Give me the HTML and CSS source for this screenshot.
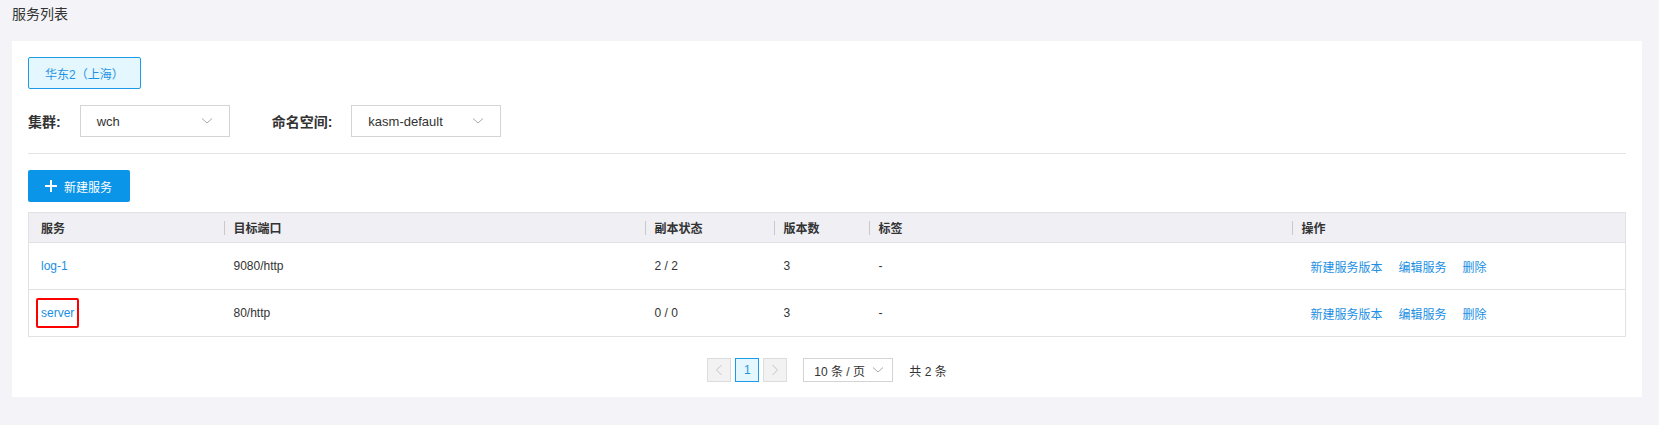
FILE: index.html
```html
<!DOCTYPE html>
<html lang="zh-CN">
<head>
  <meta charset="UTF-8">
  <title>服务列表</title>
  <link rel="stylesheet" href="styles.css">
</head>
<body>

  <div class="page-title">服务列表</div>

  <div class="card">
    <div class="region-row">
      <button class="region-btn">华东2（上海）</button>
    </div>

    <div class="filter-row">
      <label class="filter-label">集群:</label>
      <div class="select select-wide">
        <span>wch</span>
        <svg class="chevron" width="12" height="8" viewBox="0 0 12 8"><polyline points="1,1.5 6,6 11,1.5" fill="none" stroke="#aaa" stroke-width="1"/></svg>
      </div>
      <label class="filter-label ns-label">命名空间:</label>
      <div class="select select-wide">
        <span>kasm-default</span>
        <svg class="chevron" width="12" height="8" viewBox="0 0 12 8"><polyline points="1,1.5 6,6 11,1.5" fill="none" stroke="#aaa" stroke-width="1"/></svg>
      </div>
    </div>

    <div class="divider"></div>

    <button class="create-btn">
      <svg width="12" height="12" viewBox="0 0 12 12"><path d="M6 0v12M0 6h12" stroke="#fff" stroke-width="2"/></svg>
      <span>新建服务</span>
    </button>

    <table class="svc-table">
      <colgroup>
        <col style="width:195px">
        <col style="width:421px">
        <col style="width:129px">
        <col style="width:95px">
        <col style="width:423px">
        <col>
      </colgroup>
      <thead>
        <tr>
          <th>服务</th>
          <th>目标端口</th>
          <th>副本状态</th>
          <th>版本数</th>
          <th>标签</th>
          <th>操作</th>
        </tr>
      </thead>
      <tbody>
        <tr>
          <td><a class="link">log-1</a></td>
          <td>9080/http</td>
          <td>2 / 2</td>
          <td>3</td>
          <td>-</td>
          <td class="actions"><a class="link">新建服务版本</a><a class="link">编辑服务</a><a class="link">删除</a></td>
        </tr>
        <tr>
          <td><a class="link mark">server</a></td>
          <td>80/http</td>
          <td>0 / 0</td>
          <td>3</td>
          <td>-</td>
          <td class="actions"><a class="link">新建服务版本</a><a class="link">编辑服务</a><a class="link">删除</a></td>
        </tr>
      </tbody>
    </table>

    <div class="pager">
      <span class="page-btn disabled">
        <svg width="8" height="12" viewBox="0 0 8 12"><polyline points="6.5,1 1.5,6 6.5,11" fill="none" stroke="#c4c4c4" stroke-width="1"/></svg>
      </span>
      <span class="page-btn current">1</span>
      <span class="page-btn disabled">
        <svg width="8" height="12" viewBox="0 0 8 12"><polyline points="1.5,1 6.5,6 1.5,11" fill="none" stroke="#c4c4c4" stroke-width="1"/></svg>
      </span>
      <div class="select select-page">
        <span>10 条 / 页</span>
        <svg class="chevron" width="12" height="8" viewBox="0 0 12 8"><polyline points="1,1.5 6,6 11,1.5" fill="none" stroke="#aaa" stroke-width="1"/></svg>
      </div>
      <span class="total">共 2 条</span>
    </div>
  </div>

</body>
</html>
```

FILE: styles.css
```css
body {
  margin: 0;
  padding: 0 17px 0 12px;
  background-color: #f4f4f8;
  font-family: "Liberation Sans", "Noto Sans CJK SC", sans-serif;
  font-size: 12px;
  color: #333;
}
.page-title {
  height: 41px;
  line-height: 28px;
  font-size: 14px;
  color: #333;
}
.card {
  background-color: #fff;
  padding: 16px 16px 16px 16px;
  height: 356px;
  box-sizing: border-box;
}
.region-btn {
  height: 32px;
  padding: 0 16px;
  font-family: inherit;
  font-size: 12px;
  color: #1f93e3;
  background-color: #e4f6fe;
  border: 1px solid #1d9be9;
  border-radius: 2px;
}
.filter-row {
  display: flex;
  align-items: center;
  margin-top: 16px;
  height: 32px;
}
.filter-label {
  font-size: 14px;
  font-weight: bold;
  color: #333;
  margin-right: 19px;
}
.ns-label {
  margin-left: 42px;
}
.select {
  display: flex;
  align-items: center;
  justify-content: space-between;
  box-sizing: border-box;
  border: 1px solid #d4d4d4;
  background-color: #fff;
  color: #333;
}
.select-wide {
  width: 150px;
  height: 32px;
  padding: 0 16px 0 16px;
  font-size: 13px;
}
.divider {
  height: 1px;
  background-color: #e3e3e3;
  margin: 16px 0 16px;
}
.create-btn {
  display: flex;
  align-items: center;
  gap: 7px;
  height: 32px;
  padding: 0 18px 0 17px;
  font-family: inherit;
  font-size: 12px;
  color: #fff;
  background-color: #0a95e9;
  border: none;
  border-radius: 2px;
}
.svc-table {
  width: 100%;
  margin-top: 10px;
  border-collapse: collapse;
  table-layout: fixed;
  border: 1px solid #e2e2e6;
}
.svc-table th {
  height: 29px;
  text-align: left;
  font-weight: bold;
  color: #333;
  background-color: #efeff4;
  padding: 0 0 0 10px;
  background-image: linear-gradient(#c9c9cc, #c9c9cc);
  background-repeat: no-repeat;
  background-position: 0 center;
  background-size: 1px 14px;
  border-bottom: 1px solid #e2e2e6;
}
.svc-table th:first-child {
  background-image: none;
  padding-left: 12px;
}
.svc-table td {
  height: 46px;
  padding: 0 0 0 10px;
  color: #333;
  border-bottom: 1px solid #e2e2e6;
}
.svc-table td:first-child {
  padding-left: 12px;
}
.link {
  color: #1a8fe3;
  cursor: pointer;
}
.actions {
  padding-left: 19px !important;
}
.actions .link {
  margin-right: 16px;
}
.mark {
  display: inline-block;
  padding: 6px 3px;
  margin: -8px -5px;
  border: 2px solid #f00;
  border-radius: 2px;
}
.pager {
  display: flex;
  align-items: center;
  justify-content: center;
  margin-top: 21px;
  height: 24px;
}
.page-btn {
  display: flex;
  align-items: center;
  justify-content: center;
  width: 24px;
  height: 24px;
  box-sizing: border-box;
  margin-right: 4px;
  border: 1px solid #dcdcdc;
  background-color: #f2f2f2;
}
.page-btn.current {
  border-color: #1d9be9;
  background-color: #e4f6fe;
  color: #1f93e3;
}
.select-page {
  width: 90px;
  height: 24px;
  margin-left: 12px;
  padding: 0 8px 0 10px;
  font-size: 12px;
}
.total {
  margin-left: 16px;
  font-size: 12px;
}
```
